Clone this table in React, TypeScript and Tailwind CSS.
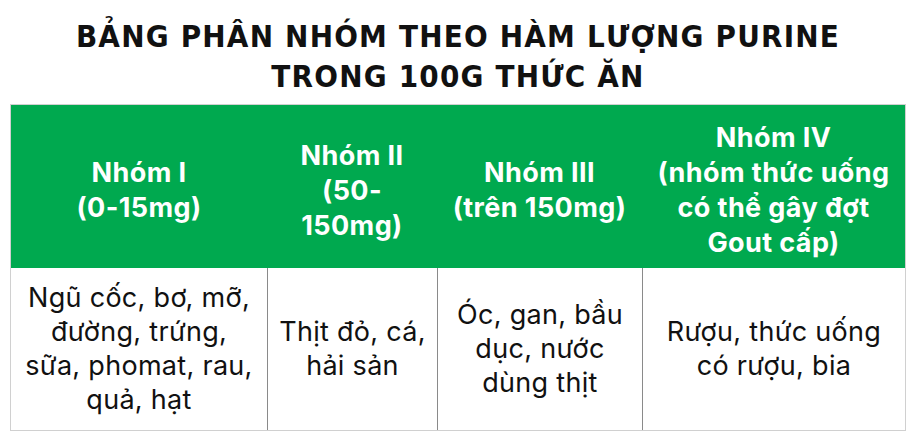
import React from 'react';

const cols = [
  { w: 'w-[256px]', head: ['Nhóm I', '(0-15mg)'], body: ['Ngũ cốc, bơ, mỡ,', 'đường, trứng,', 'sữa, phomat, rau,', 'quả, hạt'] },
  { w: 'w-[170px]', head: ['Nhóm II', '(50-', '150mg)'], body: ['Thịt đỏ, cá,', 'hải sản'] },
  { w: 'w-[205px]', head: ['Nhóm III', '(trên 150mg)'], body: ['Óc, gan, bầu', 'dục, nước', 'dùng thịt'] },
  { w: 'w-[263px]', head: ['Nhóm IV', '(nhóm thức uống', 'có thể gây đợt', 'Gout cấp)'], body: ['Rượu, thức uống', 'có rượu, bia'] },
];

export default function App() {
  return (
    <div className="w-[916px] h-[439px] bg-white flex flex-col items-center overflow-hidden">
      <h1 className="mt-[16px] text-center text-[31px] leading-[40px] font-bold text-[#111] tracking-[1.2px] [font-family:'DejaVu_Sans_Condensed','DejaVu_Sans',sans-serif]">
        BẢNG PHÂN NHÓM THEO HÀM LƯỢNG PURINE
        <br />
        TRONG 100G THỨC ĂN
      </h1>
      <div className="mt-[8px] flex border border-[#d0d0d0] [font-family:Inter,sans-serif]">
        {cols.map((c, i) => (
          <div key={i} className={`${c.w} flex flex-col ${i > 0 ? 'border-l border-[#8a8a8a]' : ''}`}>
            <div className={`h-[160px] pt-[10px] bg-[#00a94f] flex flex-col items-center justify-center text-white font-bold text-[27px] leading-[35px] tracking-[0.4px] ${i > 0 ? '-ml-px' : ''}`}>
              {c.head.map((t) => (
                <span key={t}>{t}</span>
              ))}
            </div>
            <div className={`h-[3px] bg-[#00a94f] ${i > 0 ? '-ml-px' : ''}`} />
            <div className="h-[162px] flex flex-col items-center justify-center text-[#111] text-[27px] leading-[34px] tracking-[0.3px]">
              {c.body.map((t) => (
                <span key={t}>{t}</span>
              ))}
            </div>
          </div>
        ))}
      </div>
    </div>
  );
}
